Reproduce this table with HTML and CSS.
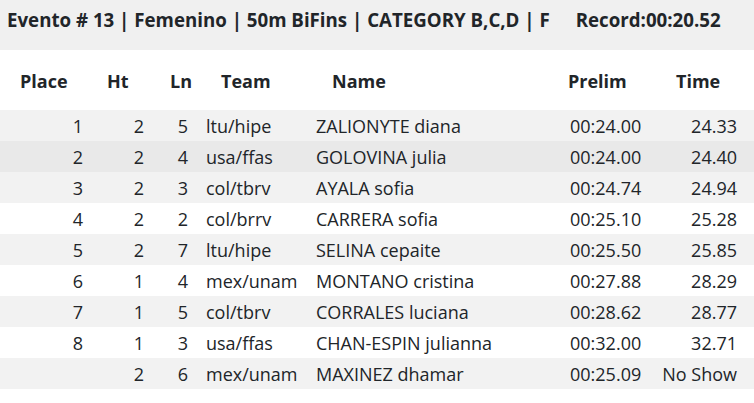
FILE: index.html
```html
<!DOCTYPE html>
<html>
<head>
<meta charset="utf-8">
<link rel="stylesheet" href="styles.css">
</head>
<body>
<div class="event">Evento # 13 | Femenino | 50m BiFins | CATEGORY B,C,D | F<span class="record">Record:00:20.52</span></div>
<div class="results">
  <div class="row head">
    <div class="c place">Place</div>
    <div class="c ht">Ht</div>
    <div class="c ln">Ln</div>
    <div class="c team">Team</div>
    <div class="c name">Name</div>
    <div class="c prelim">Prelim</div>
    <div class="c time">Time</div>
  </div>
  <div class="row odd">
    <div class="c place">1</div><div class="c ht">2</div><div class="c ln">5</div><div class="c team">ltu/hipe</div><div class="c name">ZALIONYTE diana</div><div class="c prelim">00:24.00</div><div class="c time">24.33</div>
  </div>
  <div class="row hover">
    <div class="c place">2</div><div class="c ht">2</div><div class="c ln">4</div><div class="c team">usa/ffas</div><div class="c name">GOLOVINA julia</div><div class="c prelim">00:24.00</div><div class="c time">24.40</div>
  </div>
  <div class="row odd">
    <div class="c place">3</div><div class="c ht">2</div><div class="c ln">3</div><div class="c team">col/tbrv</div><div class="c name">AYALA sofia</div><div class="c prelim">00:24.74</div><div class="c time">24.94</div>
  </div>
  <div class="row">
    <div class="c place">4</div><div class="c ht">2</div><div class="c ln">2</div><div class="c team">col/brrv</div><div class="c name">CARRERA sofia</div><div class="c prelim">00:25.10</div><div class="c time">25.28</div>
  </div>
  <div class="row odd">
    <div class="c place">5</div><div class="c ht">2</div><div class="c ln">7</div><div class="c team">ltu/hipe</div><div class="c name">SELINA cepaite</div><div class="c prelim">00:25.50</div><div class="c time">25.85</div>
  </div>
  <div class="row">
    <div class="c place">6</div><div class="c ht">1</div><div class="c ln">4</div><div class="c team">mex/unam</div><div class="c name">MONTANO cristina</div><div class="c prelim">00:27.88</div><div class="c time">28.29</div>
  </div>
  <div class="row odd">
    <div class="c place">7</div><div class="c ht">1</div><div class="c ln">5</div><div class="c team">col/tbrv</div><div class="c name">CORRALES luciana</div><div class="c prelim">00:28.62</div><div class="c time">28.77</div>
  </div>
  <div class="row">
    <div class="c place">8</div><div class="c ht">1</div><div class="c ln">3</div><div class="c team">usa/ffas</div><div class="c name">CHAN-ESPIN julianna</div><div class="c prelim">00:32.00</div><div class="c time">32.71</div>
  </div>
  <div class="row odd">
    <div class="c place"></div><div class="c ht">2</div><div class="c ln">6</div><div class="c team">mex/unam</div><div class="c name">MAXINEZ dhamar</div><div class="c prelim">00:25.09</div><div class="c time">No Show</div>
  </div>
</div>
</body>
</html>
```
FILE: styles.css
```css
html, body {
  margin: 0;
  padding: 0;
  background: #ffffff;
}
body {
  font-family: "Open Sans", "Noto Sans", sans-serif;
  color: #212529;
  width: 754px;
  overflow: hidden;
}
.event {
  background: #f0f0f0;
  height: 50px;
  box-sizing: border-box;
  padding: 6px 0 0 7px;
  font-size: 18.7px;
  font-weight: 700;
  line-height: 28px;
  white-space: nowrap;
}
.record {
  margin-left: 26px;
}
.results {
  display: flex;
  flex-direction: column;
}
.row {
  display: grid;
  grid-template-columns: 98px 56px 44px 110px 254px 88px 104px;
  height: 31px;
  align-items: center;
  font-size: 18px;
  line-height: 22px;
  white-space: nowrap;
}
.row.head {
  height: 60px;
  font-weight: 700;
  padding-top: 2px;
  box-sizing: border-box;
}
.row.odd { background: #f2f2f2; }
.row.hover { background: #e9e9e9; }
.c { box-sizing: border-box; }
.place { text-align: right; padding-right: 15px; }
.ht { text-align: right; padding-right: 10px; }
.ln { text-align: right; padding-right: 10px; }
.team { padding-left: 8px; }
.name { padding-left: 8px; }
.prelim { padding-left: 8px; }
.time { text-align: right; padding-right: 17px; }
.head .place { text-align: left; padding: 0 0 0 20px; }
.head .ht { text-align: left; padding: 0 0 0 9px; }
.head .ln { text-align: left; padding: 0 0 0 16px; }
.head .team { padding-left: 23px; }
.head .name { padding-left: 24px; }
.head .prelim { padding-left: 6px; }
.head .time { text-align: left; padding: 0 0 0 26px; }
```
